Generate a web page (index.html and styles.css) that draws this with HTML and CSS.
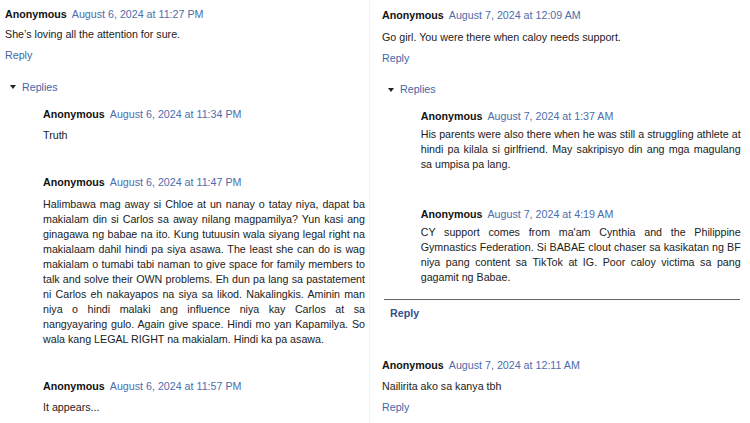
FILE: index.html
```html
<!DOCTYPE html>
<html>
<head>
<meta charset="utf-8">
<link rel="stylesheet" href="styles.css">
</head>
<body>
<div class="page">
  <section class="col col-left">
    <div class="comment c-top">
      <div class="head"><span class="name">Anonymous</span> <span class="date">August 6, 2024 at 11:27 PM</span></div>
      <p class="text t-l1">She’s loving all the attention for sure.</p>
      <a class="reply r-l1">Reply</a>
    </div>
    <div class="replies-toggle rt-l"><span class="tri"></span><span class="rlabel">Replies</span></div>
    <div class="thread">
      <div class="comment n1">
        <div class="head"><span class="name">Anonymous</span> <span class="date">August 6, 2024 at 11:34 PM</span></div>
        <p class="text t-n">Truth</p>
      </div>
      <div class="comment n2">
        <div class="head"><span class="name">Anonymous</span> <span class="date">August 6, 2024 at 11:47 PM</span></div>
        <p class="text para t-n">
          <span class="ln">Halimbawa mag away si Chloe at un nanay o tatay niya, dapat ba</span>
          <span class="ln">makialam din si Carlos sa away nilang magpamilya? Yun kasi ang</span>
          <span class="ln">ginagawa ng babae na ito. Kung tutuusin wala siyang legal right na</span>
          <span class="ln">makialaam dahil hindi pa siya asawa. The least she can do is wag</span>
          <span class="ln">makialam o tumabi tabi naman to give space for family members to</span>
          <span class="ln">talk and solve their OWN problems. Eh dun pa lang sa pastatement</span>
          <span class="ln">ni Carlos eh nakayapos na siya sa likod. Nakalingkis. Aminin man</span>
          <span class="ln">niya o hindi malaki ang influence niya kay Carlos at sa</span>
          <span class="ln">nangyayaring gulo. Again give space. Hindi mo yan Kapamilya. So</span>
          <span class="ln last">wala kang LEGAL RIGHT na makialam. Hindi ka pa asawa.</span>
        </p>
      </div>
      <div class="comment n3">
        <div class="head"><span class="name">Anonymous</span> <span class="date">August 6, 2024 at 11:57 PM</span></div>
        <p class="text t-n">It appears...</p>
      </div>
    </div>
  </section>
  <section class="col col-right">
    <div class="comment c-top-r">
      <div class="head"><span class="name">Anonymous</span> <span class="date">August 7, 2024 at 12:09 AM</span></div>
      <p class="text t-r1">Go girl. You were there when caloy needs support.</p>
      <a class="reply r-r1">Reply</a>
    </div>
    <div class="replies-toggle rt-r"><span class="tri"></span><span class="rlabel">Replies</span></div>
    <div class="thread">
      <div class="comment m1">
        <div class="head"><span class="name">Anonymous</span> <span class="date">August 7, 2024 at 1:37 AM</span></div>
        <p class="text para t-m">
          <span class="ln">His parents were also there when he was still a struggling athlete at</span>
          <span class="ln">hindi pa kilala si girlfriend. May sakripisyo din ang mga magulang</span>
          <span class="ln last">sa umpisa pa lang.</span>
        </p>
      </div>
      <div class="comment m2">
        <div class="head"><span class="name">Anonymous</span> <span class="date">August 7, 2024 at 4:19 AM</span></div>
        <p class="text para t-m">
          <span class="ln">CY support comes from ma'am Cynthia and the Philippine</span>
          <span class="ln">Gymnastics Federation. Si BABAE clout chaser sa kasikatan ng BF</span>
          <span class="ln">niya pang content sa TikTok at IG. Poor caloy victima sa pang</span>
          <span class="ln last">gagamit ng Babae.</span>
        </p>
      </div>
    </div>
    <div class="thread-foot">
      <a class="reply strong">Reply</a>
    </div>
    <div class="comment c-last">
      <div class="head"><span class="name">Anonymous</span> <span class="date">August 7, 2024 at 12:11 AM</span></div>
      <p class="text t-r2">Nailirita ako sa kanya tbh</p>
      <a class="reply r-r2">Reply</a>
    </div>
  </section>
</div>
</body>
</html>
```

FILE: styles.css
```css
* { box-sizing: border-box; }
html, body {
  margin: 0;
  padding: 0;
  background: #fff;
}
body {
  font-family: "Liberation Sans", Arial, sans-serif;
  font-size: 10.7px;
  line-height: 15px;
  color: #222;
  width: 750px;
  height: 423px;
  overflow: hidden;
}
.page {
  display: flex;
  width: 750px;
  height: 423px;
}
.col {
  position: relative;
}
.col-left {
  width: 370px;
  padding-left: 5px;
  border-right: 1px solid #f4f4f4;
}
.col-right {
  width: 380px;
  padding-left: 12px;
}
.head { display: block; }
.name {
  font-weight: bold;
  color: #111;
}
.date {
  color: #4d6dac;
  margin-left: 2px;
}
.text {
  margin: 0;
}
.reply {
  display: block;
  color: #4166a8;
  text-decoration: none;
}
.reply.strong {
  font-weight: bold;
  color: #2f4f8f;
}
.replies-toggle {
  display: flex;
  align-items: center;
}
.tri {
  width: 0;
  height: 0;
  border-left: 3px solid transparent;
  border-right: 3px solid transparent;
  border-top: 4px solid #222;
  margin-right: 6px;
}
.rlabel { color: #4166a8; }

/* paragraphs with fixed line breaks */
.para .ln {
  display: block;
  text-align: justify;
  text-align-last: justify;
}
.para .ln.last {
  text-align-last: left;
}

/* left column vertical rhythm */
.c-top { padding-top: 6.5px; }
.t-l1 { margin-top: 5px; }
.r-l1 { margin-top: 6px; }
.rt-l { margin-top: 17px; padding-left: 5px; }
.col-left .thread {
  padding-left: 38px;
  width: 360px;
}
.n1 { margin-top: 12px; }
.t-n { margin-top: 6.5px; }
.n2 { margin-top: 32px; }
.n2 .para { margin-top: 7px; width: 322px; }
.n3 { margin-top: 31.5px; }

/* right column vertical rhythm */
.c-top-r { padding-top: 8px; }
.t-r1 { margin-top: 7px; }
.r-r1 { margin-top: 6px; }
.rt-r { margin-top: 16px; padding-left: 6px; }
.col-right .thread {
  padding-left: 38.7px;
}
.m1 { margin-top: 11.5px; }
.t-m { margin-top: 3px; width: 320px; }
.m2 { margin-top: 35.5px; }
.m2 .t-m { margin-top: 2.5px; }
.thread-foot {
  margin-top: 14px;
  margin-left: 2px;
  width: 356px;
  border-top: 1.5px solid #666;
  padding-top: 6px;
  padding-left: 6px;
}
.c-last { margin-top: 37.5px; }
.t-r2 { margin-top: 5.5px; }
.r-r2 { margin-top: 6px; }
```
